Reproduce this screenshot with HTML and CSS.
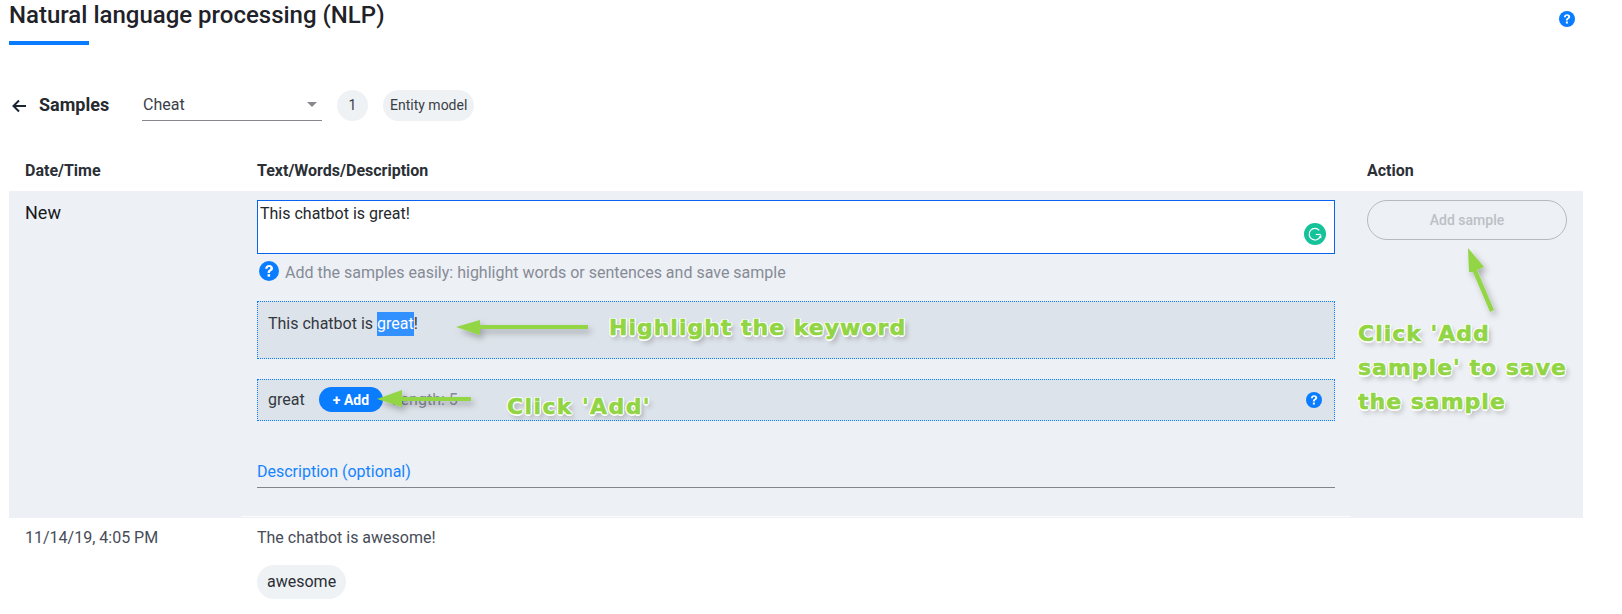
FILE: index.html
```html
<!DOCTYPE html>
<html lang="en">
<head>
<meta charset="utf-8">
<title>Natural language processing (NLP)</title>
<link rel="stylesheet" href="styles.css">
</head>
<body>
<div class="page">
  <header class="title-bar">
    <div class="title-block">
      <h1 class="title">Natural language processing (NLP)</h1>
      <div class="title-rule"></div>
    </div>
    <svg class="help help-top" viewBox="0 0 24 24"><use href="#q"/></svg>
  </header>

  <div class="toolbar">
    <svg class="back" viewBox="0 0 16 16"><path d="M15 8H2.500M8 2.500 2.500 8 8 13.500" fill="none" stroke="#1b2433" stroke-width="2"/></svg>
    <span class="samples">Samples</span>
    <div class="select"><span>Cheat</span><i class="caret"></i></div>
    <span class="chip chip-round">1</span>
    <span class="chip">Entity model</span>
  </div>

  <div class="table">
    <div class="row head">
      <div>Date/Time</div>
      <div>Text/Words/Description</div>
      <div>Action</div>
    </div>

    <div class="row new">
      <div class="new-label">New</div>
      <div class="new-main">
        <div class="textarea">This chatbot is great!
          <svg class="grammarly" viewBox="0 0 22 22"><circle cx="11" cy="11" r="11" fill="#15c39a"/><path d="M15.300 7.300A5.800 5.800 0 1 0 16.300 13.500" fill="none" stroke="#fff" stroke-width="1.200"/><path d="M11.800 11.500H16.600" fill="none" stroke="#fff" stroke-width="1.200"/><path d="M14.600 14.500 17.200 11.200 17.400 15.200z" fill="#fff"/></svg>
        </div>
        <div class="hint">
          <svg class="help help-hint" viewBox="0 0 24 24"><use href="#q"/></svg>
          <span>Add the samples easily: highlight words or sentences and save sample</span>
        </div>
        <div class="dotted pick">This chatbot is <span class="selected">great</span>!</div>
        <div class="dotted word">
          <span class="word-text">great</span>
          <span class="add">+ Add</span>
          <span class="length">Length: 5</span>
          <svg class="help help-word" viewBox="0 0 24 24"><use href="#q"/></svg>
        </div>
        <div class="description">Description (optional)</div>
      </div>
      <div class="new-action">
        <div class="add-sample">Add sample</div>
      </div>
      <div class="row-seam"></div>
    </div>

    <div class="row entry">
      <div>11/14/19, 4:05 PM</div>
      <div>
        <div class="entry-text">The chatbot is awesome!</div>
        <div class="tag">awesome</div>
      </div>
      <div></div>
    </div>
  </div>
</div>

<svg class="overlay" viewBox="0 0 1622 614">
  <defs>
    <filter id="soft" x="-30%" y="-30%" width="160%" height="160%"><feDropShadow dx="3" dy="4" stdDeviation="3" flood-color="#000" flood-opacity=".28"/></filter>
  </defs>
  <g fill="#92d544" filter="url(#soft)">
    <path d="M456 327 480 320V325H588V329H480V335z"/>
    <path d="M377 399 402 390V397H471V401H402V407z"/>
    <path d="M1468 248 1484 267 1477 270 1494 310 1490 312 1473 272 1469 272z"/>
  </g>
</svg>
<div class="note note-highlight">Highlight the keyword</div>
<div class="note note-add">Click 'Add'</div>
<div class="note note-save">Click 'Add<br>sample' to save<br>the sample</div>

<svg class="icon-defs" width="0" height="0">
  <symbol id="q" viewBox="0 0 24 24">
    <circle cx="12" cy="12" r="12" fill="#0a7cff"/>
    <path d="M7.400 9.200C7.500 6.400 9.500 4.700 12.200 4.700c2.700 0 4.600 1.500 4.600 3.900 0 1.600-.8 2.600-2.200 3.500-1.100.7-1.400 1.200-1.400 2.300h-2.900c0-2 .6-3 2-3.900.9-.6 1.500-1.100 1.500-1.800 0-.9-.7-1.500-1.700-1.500-1.100 0-1.800.7-1.900 2z" fill="#fff"/>
    <rect x="10.300" y="15.800" width="3" height="3" fill="#fff"/>
  </symbol>
</svg>
</body>
</html>
```
FILE: styles.css
```css
* { box-sizing: border-box; }
html, body { margin: 0; padding: 0; background: #fff; }
body { font-family: Roboto, "Liberation Sans", sans-serif; color: #212529; width: 1622px; height: 614px; overflow: hidden; position: relative; }
.page { padding: 0 39px 0 9px; }
.title-bar { display: flex; justify-content: space-between; height: 45px; }
.title { margin: 0; font-size: 24px; line-height: 28px; font-weight: 500; height: 41px; padding-top: 1px; color: #1f2228; }
.title-block { display: flex; flex-direction: column; align-items: flex-start; }
.title-rule { width: 80px; height: 4px; background: #0a7cff; }
.help { display: block; }
.help-top { width: 16px; height: 16px; margin: 11px 8px 0 0; }

.toolbar { display: flex; align-items: center; height: 32px; margin-top: 44px; }
.back { width: 16px; height: 16px; margin: 1px 0 0 2px; }
.samples { font-size: 18px; font-weight: 700; margin-left: 12px; width: 103px; position: relative; top: -1px; color: #262a30; }
.select { width: 180px; height: 32px; border-bottom: 1px solid #868a8e; display: flex; align-items: center; justify-content: space-between; font-size: 16px; color: #3b4048; padding: 0 5px 0 1px; }
.caret { width: 0; height: 0; border-left: 5px solid transparent; border-right: 5px solid transparent; border-top: 5px solid #868a8e; }
.chip { height: 31px; border-radius: 16px; background: #eff2f5; display: inline-flex; align-items: center; padding: 0 7px; font-size: 14px; color: #3a3f47; margin-left: 15px; }
.chip-round { width: 31px; justify-content: center; padding: 0; margin-left: 15px; }

.row { display: grid; grid-template-columns: 248px 1110px 216px; }
.row > div { padding: 0 32px 0 16px; }
.row > div:nth-child(2) { padding: 0 32px 0 0; }
.row > div:nth-child(3) { padding: 0 16px 0 0; }
.head { height: 70px; align-items: center; font-size: 16px; font-weight: 700; color: #2b2f36; padding-top: 29px; }
.new { background: #edf0f4; height: 327px; padding-top: 9px; position: relative; }
.new-label { font-size: 18px; font-weight: 400; line-height: 24px; padding-top: 1px !important; color: #16191d; }
.textarea { height: 54px; border: 1px solid #0a62f0; background: #fff; font-size: 16px; line-height: 18px; padding: 4px 2px; color: #24272c; position: relative; }
.grammarly { position: absolute; right: 8px; bottom: 8px; width: 22px; height: 22px; }
.hint { display: flex; align-items: center; height: 20px; margin-top: 7px; padding-left: 2px; color: #868b97; font-size: 16px; }
.hint span { position: relative; top: 1px; }
.help-hint { width: 20px; height: 20px; margin-right: 6px; }
.dotted { border: 1px dotted #0a7cff; background: #dde3ea; font-size: 16px; color: #33383f; }
.pick { height: 58px; margin-top: 20px; padding: 10px; line-height: 24px; }
.selected { background: #3390ff; color: #fff; display: inline-block; line-height: 24px; }
.word { height: 42px; margin-top: 20px; padding: 0 10px 1px; display: flex; align-items: center; }
.word-text { width: 51px; }
.add { width: 64px; height: 25px; border-radius: 13px; background: #0a7cff; color: #fff; font-size: 14px; font-weight: 700; display: flex; align-items: center; justify-content: center; }
.length { margin-left: 9px; color: #868b97; }
.help-word { width: 16px; height: 16px; margin-left: auto; margin-right: 2px; }
.description { margin-top: 41px; height: 26px; border-bottom: 1px solid #80868c; color: #1584ff; font-size: 16px; line-height: 20px; }
.add-sample { height: 40px; border: 1px solid #b6babe; border-radius: 20px; display: flex; align-items: center; justify-content: center; font-size: 14px; color: #bcc0c5; font-weight: 500; }
.row-seam { position: absolute; left: 232px; bottom: 1px; width: 1110px; height: 1px; padding: 0 !important; background: #fbfcfd; }
.entry { font-size: 16px; color: #474c57; padding-top: 10px; }
.entry-text { line-height: 20px; }
.tag { display: flex; align-items: center; width: fit-content; height: 34px; border-radius: 17px; background: #eff2f5; color: #2a2e34; font-size: 16px; padding: 0 10px 1px; margin-top: 17px; }

.overlay { position: absolute; left: 0; top: 0; width: 1622px; height: 614px; pointer-events: none; }
.icon-defs { position: absolute; }
.note { position: absolute; font-family: "DejaVu Sans", sans-serif; font-weight: 700; color: #92d544; -webkit-text-stroke: .6px #92d544; text-shadow: -1.500px 0 #fff, 1.500px 0 #fff, 0 -1.500px #fff, 0 1.500px #fff, -1px -1px #fff, 1px 1px #fff, -1px 1px #fff, 1px -1px #fff, 3px 4px 5px rgba(0,0,0,.25); white-space: nowrap; letter-spacing: 1px; }
.note-highlight { left: 609px; top: 314px; font-size: 22px; line-height: 28px; }
.note-add { left: 507px; top: 393px; font-size: 22px; line-height: 28px; letter-spacing: 1.400px; }
.note-save { left: 1358px; top: 317px; font-size: 22px; line-height: 34px; }
```
